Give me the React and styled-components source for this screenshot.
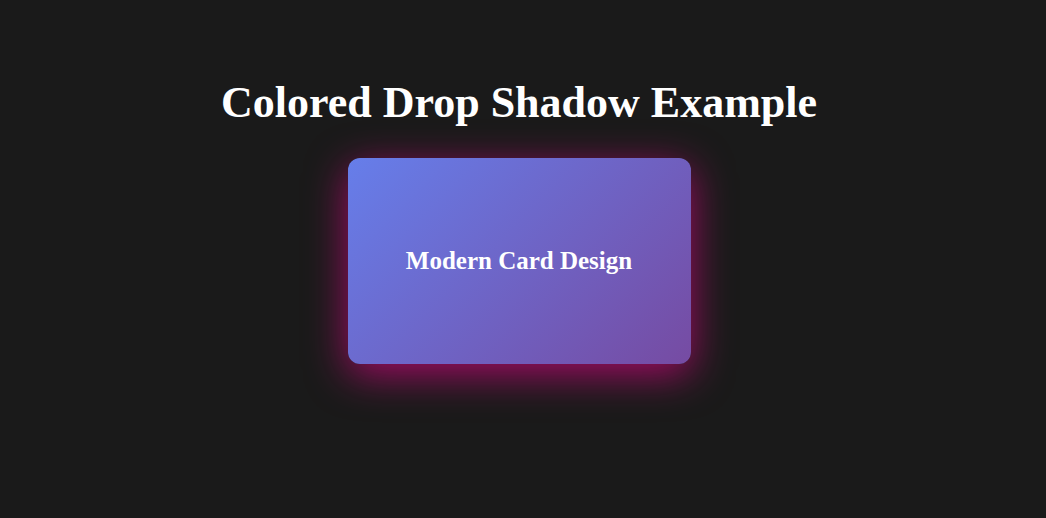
import styled, { createGlobalStyle } from "styled-components";

const GlobalStyle = createGlobalStyle`
  html, body {
    margin: 0;
    padding: 0;
    background-color: #1a1a1a;
  }
  body {
    font-family: "Liberation Serif", "Times New Roman", serif;
  }
`;

export default function App() {
  return (
    <>
      <GlobalStyle />
      <Page>
        <Title>Colored Drop Shadow Example</Title>
        <Card>
          <CardTitle>Modern Card Design</CardTitle>
        </Card>
      </Page>
    </>
  );
}

const Page = styled.div`
  min-height: 518px;
  box-sizing: border-box;
  padding: 76px 8px 0 0;
  display: flex;
  flex-direction: column;
  align-items: center;
  background-color: #1a1a1a;
`;

const Title = styled.h1`
  margin: 0 0 28px;
  font-size: 44px;
  line-height: 54px;
  font-weight: bold;
  color: #ffffff;
`;

const Card = styled.div`
  width: 343px;
  height: 206px;
  border-radius: 12px;
  background: linear-gradient(135deg, #667eea 0%, #764ba2 100%);
  box-shadow: 0 10px 40px rgba(255, 0, 153, 0.6);
  display: flex;
  align-items: center;
  justify-content: center;
`;

const CardTitle = styled.h2`
  margin: 0;
  font-size: 25px;
  font-weight: bold;
  color: #ffffff;
`;
